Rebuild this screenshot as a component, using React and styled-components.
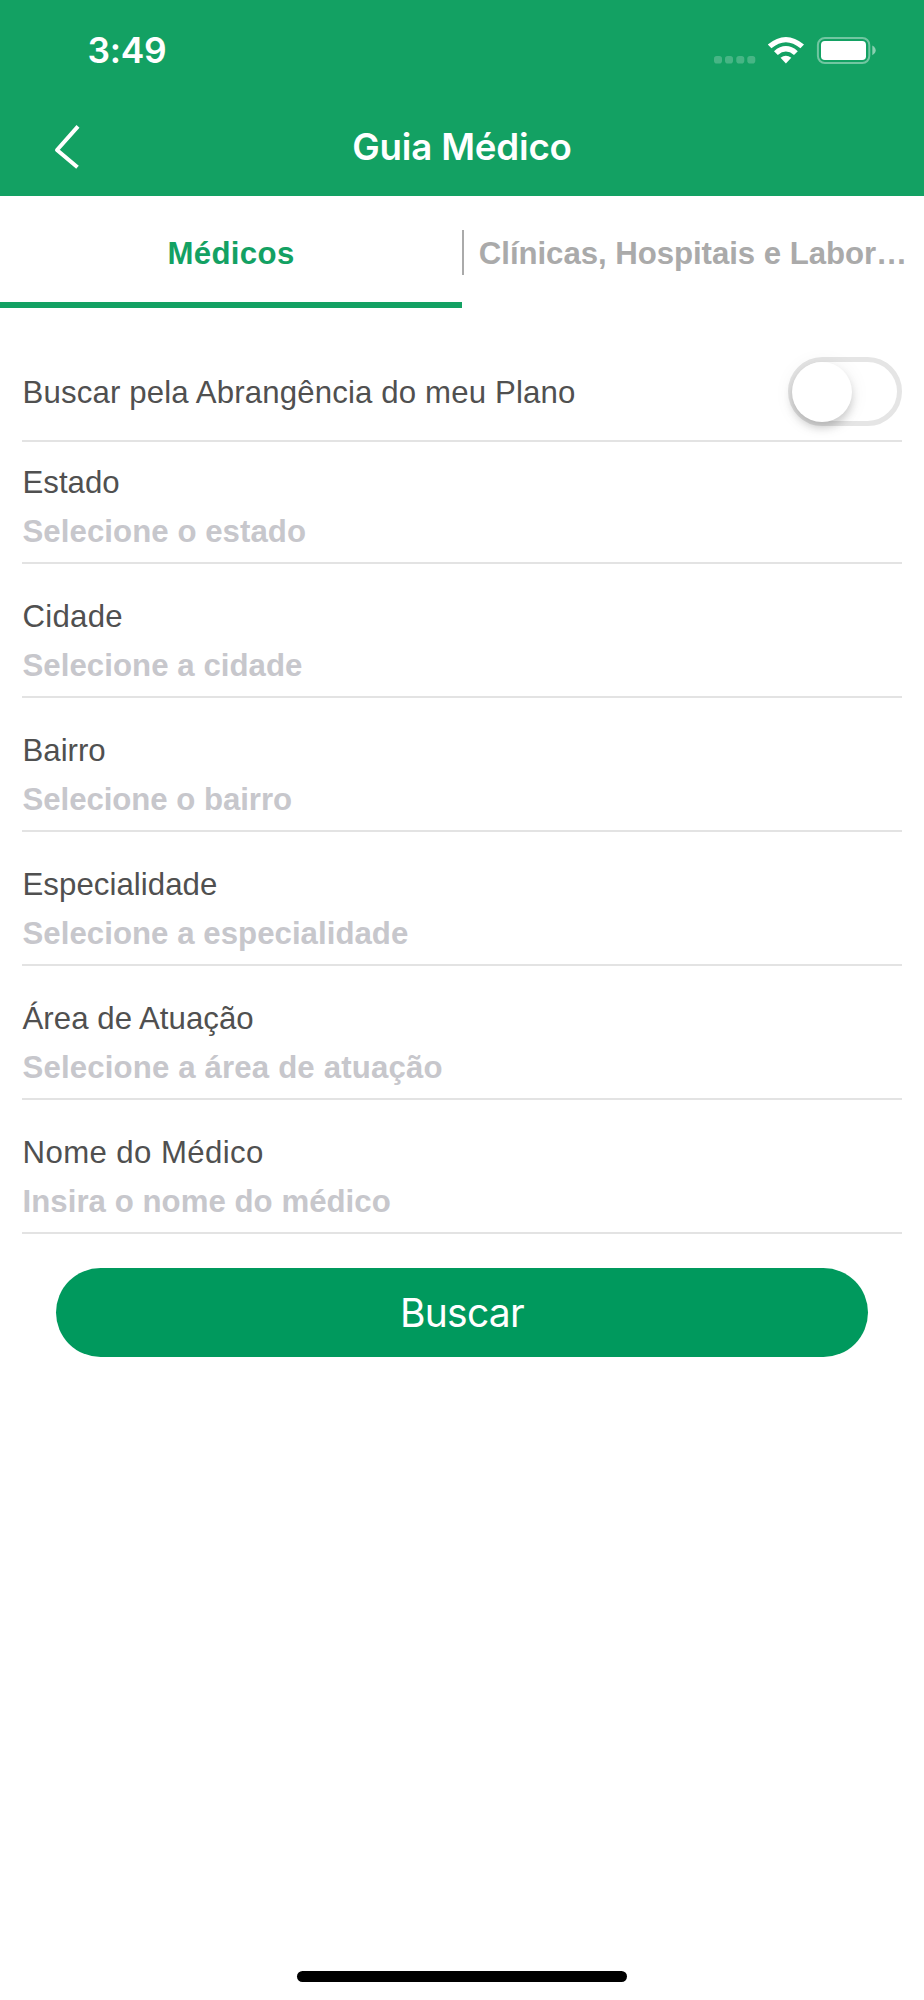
import React from "react";
import styled, { createGlobalStyle } from "styled-components";

const GlobalStyle = createGlobalStyle`
  * { box-sizing: border-box; }
  body { margin: 0; background: #fff; }
`;

const sans = `"Liberation Sans", Arial, sans-serif`;
const system = `Inter, "Liberation Sans", sans-serif`;

const Screen = styled.main`
  width: 924px;
  height: 2000px;
  display: flex;
  flex-direction: column;
  background: #fff;
  font-family: ${sans};
  overflow: hidden;
`;

const Header = styled.header`
  height: 196.4px;
  flex: none;
  background: #13a163;
  color: #fff;
  font-family: ${system};
`;

const StatusBar = styled.div`
  height: 100px;
  display: flex;
  justify-content: space-between;
  padding: 0 48px 0 87.5px;
`;

const Time = styled.span`
  font-size: 35.4px;
  line-height: 102px;
  font-weight: 600;
  letter-spacing: -0.3px;
`;

const StatusIcons = styled.svg`
  width: 164px;
  height: 32px;
  margin-top: 35px;
`;

const NavBar = styled.div`
  height: 96px;
  display: grid;
  grid-template-columns: 120px 1fr 120px;
  align-items: center;
`;

const BackButton = styled.button`
  border: 0;
  background: none;
  padding: 0;
  height: 96px;
  color: inherit;
`;

const BackIcon = styled.svg`
  display: block;
  width: 30px;
  height: 48px;
  margin: -2px 0 0 51.5px;
`;

const Title = styled.h1`
  margin: 0;
  padding-bottom: 3px;
  font-size: 36.7px;
  line-height: 93px;
  font-weight: 600;
  letter-spacing: -0.2px;
  text-align: center;
`;

const Tabs = styled.nav`
  display: flex;
  height: 111.6px;
  flex: none;
`;

const Tab = styled.button`
  width: 462px;
  border: 0;
  border-bottom: 6.5px solid ${(p) => (p.$active ? "#13a163" : "transparent")};
  background: none;
  padding: 8px 0 0;
  display: flex;
  align-items: center;
  color: ${(p) => (p.$active ? "#13a163" : "#aaaaaa")};
  font: bold 31.2px/44px ${sans};
`;

const TabLabel = styled.span`
  flex: 1;
  padding-top: 1px;
  text-align: center;
  letter-spacing: ${(p) => p.$tracking || 0}px;
  white-space: nowrap;
`;

const Divider = styled.span`
  width: 2px;
  height: 45px;
  margin: -2px -2px 0 0;
  background: #aaaaaa;
`;

const Form = styled.form`
  display: flex;
  flex-direction: column;
  padding: 0 22px;
`;

const SwitchRow = styled.div`
  height: 134px;
  display: flex;
  justify-content: space-between;
  align-items: flex-start;
  padding-top: 49px;
  border-bottom: 2px solid #e3e3e3;
`;

const Label = styled.label`
  padding-left: 0.5px;
  color: #505050;
  font-size: 31.2px;
  line-height: 34.6px;
  letter-spacing: ${(p) => p.$tracking || 0}px;
`;

const SwitchLabel = styled(Label)`
  line-height: 71px;
`;

const Switch = styled.span`
  width: 114px;
  height: 69px;
  border: 5px solid #e5e5e5;
  border-radius: 35px;
`;

const Thumb = styled.span`
  display: block;
  width: 60px;
  height: 60px;
  margin-left: -1px;
  border-radius: 50%;
  background: #fff;
  box-shadow: 0 6px 9px rgba(0, 0, 0, 0.17), 0 2px 20px rgba(0, 0, 0, 0.07);
`;

const Field = styled.div`
  height: ${(p) => (p.$first ? 122.5 : 134)}px;
  display: flex;
  flex-direction: column;
  justify-content: flex-end;
  border-bottom: 2px solid #e3e3e3;
`;

const Placeholder = styled.span`
  padding-left: 0.5px;
  color: #c7c7cc;
  font-weight: bold;
  font-size: 31.2px;
  line-height: 61.6px;
  letter-spacing: ${(p) => p.$tracking || 0}px;
`;

const SubmitButton = styled.button`
  height: 89px;
  margin: 33.5px 34px 0;
  padding: 0;
  border: 0;
  border-radius: 45px;
  background: #00995d;
  color: #fff;
  font-family: ${system};
  font-size: 39px;
  font-weight: 400;
  line-height: 89px;
  letter-spacing: -0.75px;
`;

const HomeIndicator = styled.div`
  width: 330px;
  height: 11px;
  margin: auto auto 18px;
  border-radius: 6px;
  background: #000;
`;

const fields = [
  { label: "Estado", placeholder: "Selecione o estado", labelTracking: 0, tracking: 0.06 },
  { label: "Cidade", placeholder: "Selecione a cidade", labelTracking: 0.25, tracking: 0.05 },
  { label: "Bairro", placeholder: "Selecione o bairro", labelTracking: 0, tracking: -0.05 },
  { label: "Especialidade", placeholder: "Selecione a especialidade", labelTracking: 0.05, tracking: 0.04 },
  { label: "Área de Atuação", placeholder: "Selecione a área de atuação", labelTracking: 0.04, tracking: 0.15 },
  { label: "Nome do Médico", placeholder: "Insira o nome do médico", labelTracking: 0.4, tracking: 0.04 },
];

export default function App() {
  return (
    <Screen>
      <GlobalStyle />
      <Header>
        <StatusBar>
          <Time>3:49</Time>
          <StatusIcons viewBox="712 35 164 32" fill="#fff">
            <g opacity="0.22">
              <rect x="714" y="56" width="8" height="7.5" rx="2.8" />
              <rect x="725" y="56" width="8" height="7.5" rx="2.8" />
              <rect x="736.3" y="56" width="8" height="7.5" rx="2.8" />
              <rect x="747.3" y="56" width="8" height="7.5" rx="2.8" />
            </g>
            <path d="M767.8 44.5Q785.9 29.3 804 44.5L800.4 48.2Q785.9 36.2 771.4 48.2Z" />
            <path d="M774 51.2Q785.9 41 797.8 51.2L794 55Q785.9 48.2 777.8 55Z" />
            <path d="M780.5 57.8Q785.9 53.6 791.3 57.8L785.9 63.4Z" />
            <rect x="817.9" y="37.9" width="51.4" height="25.2" rx="7" fill="none" stroke="#fff" strokeWidth="2" opacity="0.4" />
            <rect x="821" y="41" width="45" height="19" rx="3.8" />
            <path d="M872.3 45.5Q875.7 47.5 875.7 50.3Q875.7 53.2 872.3 55.2Z" opacity="0.5" />
          </StatusIcons>
        </StatusBar>
        <NavBar>
          <BackButton aria-label="Voltar">
            <BackIcon viewBox="0 0 30 48" fill="none" stroke="#fff" strokeWidth="4">
              <path d="M26 3.3L5 27L25.5 44.3" strokeLinejoin="round" />
            </BackIcon>
          </BackButton>
          <Title>Guia Médico</Title>
        </NavBar>
      </Header>
      <Tabs>
        <Tab $active>
          <TabLabel $tracking={0.35}>Médicos</TabLabel>
        </Tab>
        <Tab>
          <Divider />
          <TabLabel $tracking={-0.05}>Clínicas, Hospitais e Labor…</TabLabel>
        </Tab>
      </Tabs>
      <Form onSubmit={(e) => e.preventDefault()}>
        <SwitchRow>
          <SwitchLabel $tracking={0.14}>Buscar pela Abrangência do meu Plano</SwitchLabel>
          <Switch role="switch" aria-checked="false">
            <Thumb />
          </Switch>
        </SwitchRow>
        {fields.map((field, i) => (
          <Field key={field.label} $first={i === 0}>
            <Label $tracking={field.labelTracking}>{field.label}</Label>
            <Placeholder $tracking={field.tracking}>{field.placeholder}</Placeholder>
          </Field>
        ))}
        <SubmitButton>Buscar</SubmitButton>
      </Form>
      <HomeIndicator />
    </Screen>
  );
}
